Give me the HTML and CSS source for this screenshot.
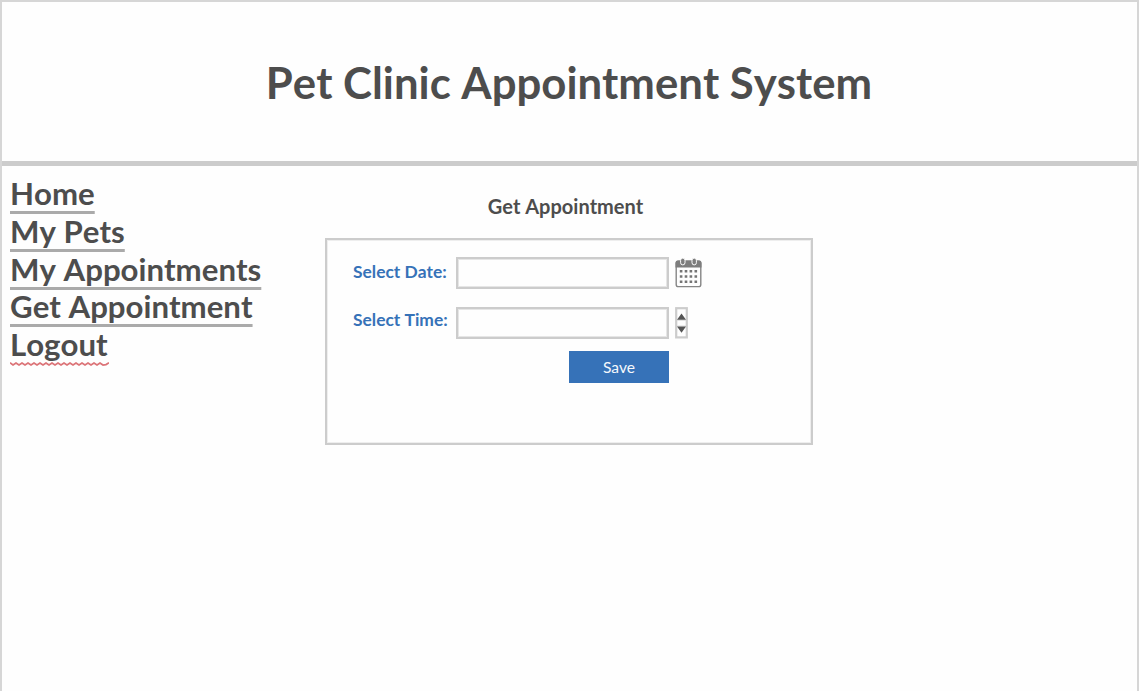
FILE: index.html
```html
<!DOCTYPE html>
<html lang="en">
<head>
<meta charset="utf-8">
<title>Pet Clinic Appointment System</title>
<link rel="stylesheet" href="styles.css">
</head>
<body>
<div class="page">
  <header class="header"><h1 class="title">Pet Clinic Appointment System</h1></header>
  <div class="body">
    <nav class="nav">
      <a class="nav-link">Home</a>
      <a class="nav-link">My Pets</a>
      <a class="nav-link">My Appointments</a>
      <a class="nav-link">Get Appointment</a>
      <a class="nav-link nav-link-logout">Logout<svg class="squiggle" width="99" height="4" viewBox="0 0 99 4"><path d="M0 .8L3 3L6 1L9 3L12 1L15 3L18 1L21 3L24 1L27 3L30 1L33 3L36 1L39 3L42 1L45 3L48 1L51 3L54 1L57 3L60 1L63 3L66 1L69 3L72 1L75 3L78 1L81 3L84 1L87 3L90 1L93 3L96 2.6L99 .8" fill="none" stroke="#dc7478" stroke-width="1.7"/></svg></a>
    </nav>
    <main class="main">
      <h2 class="heading">Get Appointment</h2>
      <form class="panel">
        <div class="row">
          <label class="label" for="date">Select Date:</label>
          <input class="field" id="date" type="text">
          <svg class="calendar" width="28" height="30" viewBox="0 0 28 30">
            <rect x="1.2" y="3.2" width="24.6" height="25.4" rx="2.2" fill="#fefefe" stroke="#858585" stroke-width="1.4"/>
            <path d="M.5 9.5V4.8Q.5 2.5 2.8 2.5H24.2Q26.5 2.5 26.5 4.8V9.5Z" fill="#7d7d7d"/>
            <g fill="#7d7d7d" stroke="#fefefe" stroke-width="1"><rect x="5.6" y=".1" width="4.4" height="6.8" rx="2.2"/><rect x="17" y=".1" width="4.4" height="6.8" rx="2.2"/></g>
            <path d="M4.8 13.2H23M4.8 18.5H23M4.8 23.8H23" stroke="#757575" stroke-width="2.6" stroke-dasharray="2.6 2.3"/>
          </svg>
        </div>
        <div class="row row-time">
          <label class="label" for="time">Select Time:</label>
          <input class="field" id="time" type="text">
          <svg class="stepper" width="13" height="32" viewBox="0 0 13 32">
            <rect x="1.2" y="1.2" width="10.6" height="29.2" fill="#fefefe" stroke="#ccc" stroke-width="2.2"/>
            <path d="M2 13.3H11M2 19H11" stroke="#ddd" stroke-width="1"/>
            <path d="M6.5 6.4L11 12.8H2ZM6.5 25.8L11 19.5H2Z" fill="#555"/>
          </svg>
        </div>
        <button class="save" type="button">Save</button>
      </form>
    </main>
  </div>
</div>
</body>
</html>
```
FILE: styles.css
```css
* { box-sizing: border-box; }
body { margin: 0; background: #fefefe; color: #4d4d4d; font-family: Lato, sans-serif; font-kerning: none; }
.page { height: 691px; border: 2px solid #d6d6d6; border-bottom: 0; overflow: hidden; }
.header { height: 164px; border-bottom: 5px solid #ccc; display: flex; justify-content: center; padding: 54px 1px 0 0; }
.title { margin: 0; font-size: 43.7px; line-height: 53px; font-weight: 700; white-space: nowrap; }
.body { display: flex; }
.nav { width: 323px; padding: 9.4px 0 0 8px; display: flex; flex-direction: column; align-items: flex-start; }
.nav-link { position: relative; font-size: 31.2px; line-height: 37.6px; font-weight: 700; white-space: nowrap; text-decoration: underline #aaa 2.5px; text-underline-offset: 6px; text-decoration-skip-ink: none; }
.nav-link-logout { text-decoration: none; }
.squiggle { position: absolute; left: 0; top: 36px; }
.main { width: 488px; padding-top: 27px; }
.heading { margin: 0 0 19px; padding-right: 7px; text-align: center; font-size: 20px; line-height: 26px; font-weight: 700; }
.panel { height: 207px; border: 2px solid #ccc; box-shadow: inset 0 0 0 1px #eee; padding: 17px 0 0 26px; }
.row { display: flex; height: 32px; }
.row-time { margin-top: 18px; }
.label { width: 103px; font-size: 17.4px; line-height: 29px; font-weight: 700; color: #3672b8; white-space: nowrap; }
.row-time .label { line-height: 25px; }
.field { width: 213px; height: 32px; border: 2px solid #ccc; box-shadow: inset 0 0 0 1px #e6e6e6; border-radius: 0; padding: 0 6px; background: #fefefe; font: 16px Lato, sans-serif; outline: 0; }
.calendar, .stepper { margin-left: 6px; flex: none; }
.calendar { margin-top: 1px; }
.save { display: block; width: 100px; height: 31.5px; margin: 12px 0 0 216px; border: 0; padding: 0; background: #3672b8; color: #f5f8fc; font: 15.6px/32px Lato, sans-serif; }
```
